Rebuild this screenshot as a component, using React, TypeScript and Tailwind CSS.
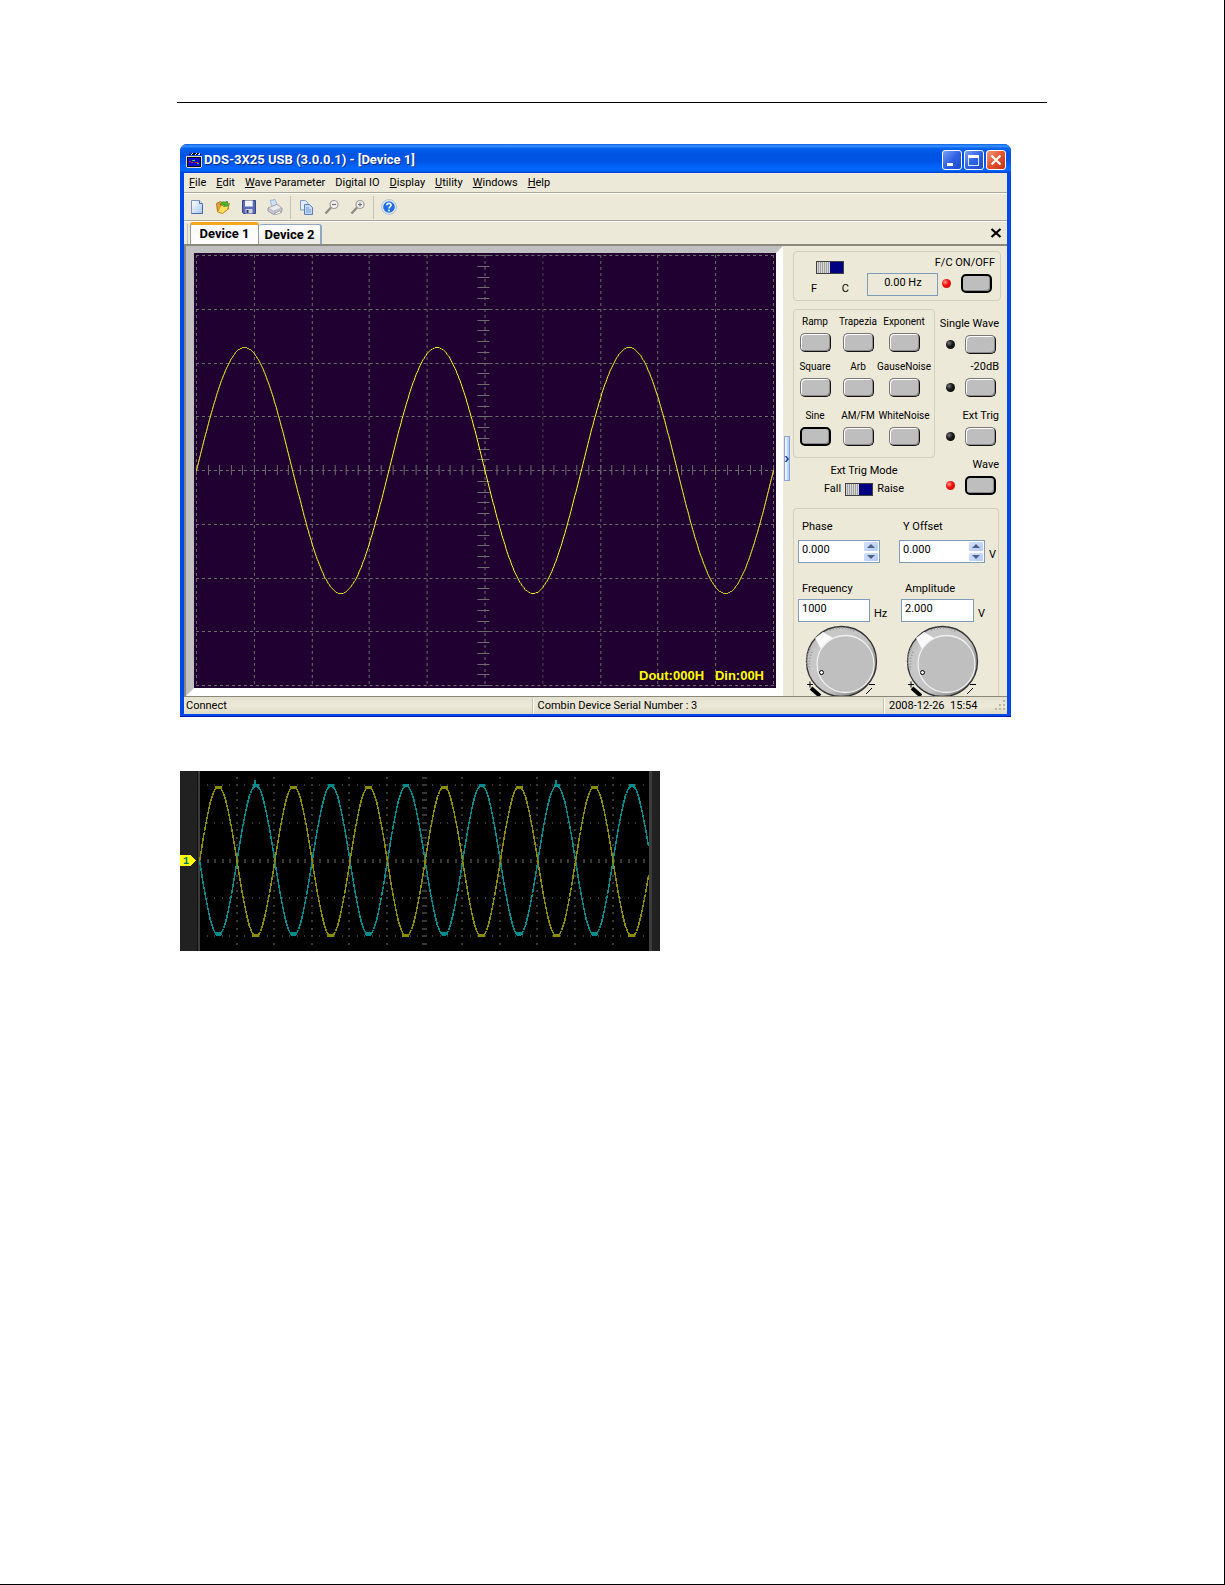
import { useState } from "react"
import type { ReactNode } from "react"

const MENUS = [
  ["", "F", "ile"],
  ["", "E", "dit"],
  ["", "W", "ave Parameter"],
  ["Di", "g", "ital IO"],
  ["", "D", "isplay"],
  ["", "U", "tility"],
  ["", "W", "indows"],
  ["", "H", "elp"],
]

const WAVE_ROWS = [
  { names: ["Ramp", "Trapezia", "Exponent"], className: "mt-[5px]" },
  { names: ["Square", "Arb", "GauseNoise"], className: "mt-2" },
  { names: ["Sine", "AM/FM", "WhiteNoise"], className: "mt-3" },
]

// stair-stepped sine, one point per `step` pixels
function sinePath(x0: number, x1: number, mid: number, amp: number, start: number, period: number, step: number) {
  let d = ""
  for (let x = x0; x <= x1; x += step) {
    const y = Math.round(mid - amp * Math.sin(((x - start) / period) * Math.PI * 2))
    d += `${d ? "L" : "M"}${x + 0.5} ${y + 0.5}`
  }
  return d
}

const range = (n: number) => Array.from({ length: n }, (_, i) => i)

/* ---------- toolbar icons ---------- */

function NewIcon() {
  return (
    <svg width="16" height="16" viewBox="0 0 16 16">
      <defs>
        <linearGradient id="sheet" x1="0" y1="0" x2="1" y2="1">
          <stop offset="0" stopColor="#fff" />
          <stop offset="1" stopColor="#a9c6f5" />
        </linearGradient>
      </defs>
      <path d="M2.5 1.5h8l3 3v10h-11z" fill="url(#sheet)" stroke="#7d93c8" />
      <path d="M10.500 1.500v3h3" fill="#dfe9fb" stroke="#5871b4" />
      <path d="M2.500 14.500h11v-9" fill="none" stroke="#4a66ae" />
    </svg>
  )
}

function OpenIcon() {
  return (
    <svg width="16" height="16" viewBox="0 0 16 16">
      <path d="M1.500 4.500l4-2 2 1.500 5-1 1 7-6 4-5-2z" fill="#e8a43a" stroke="#b8701c" />
      <path d="M2.500 13l3-6 9-2.500-2 6-5 4z" fill="#ffdf5e" stroke="#c98a22" />
      <path d="M5 6c1-3.500 4-4 6-2.500l1-1.500 1.500 5-5 .5 1.300-1.700C8.500 5 7 5 5 6z" fill="#49b83a" stroke="#25831d" strokeWidth=".6" />
    </svg>
  )
}

function SaveIcon() {
  return (
    <svg width="16" height="16" viewBox="0 0 16 16">
      <path d="M1.500 1.500h13v13h-12l-1-1z" fill="#5a6bb5" stroke="#3a4586" />
      <path d="M4 1.500h8v6H4z" fill="#f4f6fb" />
      <path d="M11 2h1v5h-1z" fill="#c3cbe4" />
      <path d="M4.500 10h7v4.500h-7z" fill="#cfd3e2" />
      <path d="M5.500 11h2v3h-2z" fill="#2c3570" />
    </svg>
  )
}

function PrintIcon() {
  return (
    <svg width="16" height="16" viewBox="0 0 16 16">
      <path d="M3 1.500l5-1 2.500 6-5 2z" fill="#cfe2fb" stroke="#92a9cc" strokeWidth=".8" />
      <path d="M1 9l9-3.500 5 3.500v3l-8.500 3.500L1 12z" fill="#c9cad0" stroke="#8b8d96" strokeWidth=".8" />
      <path d="M1 9l5.500 3 8.500-3-5-3.500z" fill="#ececf0" stroke="#9a9ca4" strokeWidth=".6" />
      <path d="M7 14.500l5.500-2.500 2 1.500-5 2z" fill="#fff" stroke="#777" strokeWidth=".6" />
    </svg>
  )
}

function CopyIcon() {
  return (
    <svg width="16" height="16" viewBox="0 0 16 16">
      <path d="M2.500 1.500h5l2.500 2.500v7H2.500z" fill="#e2ecfc" stroke="#7f9bd0" />
      <path d="M6.500 5.500h5l3 3v7h-8z" fill="#c4d9f9" stroke="#5c7fc2" />
      <path d="M8 9h3M8 11h5M8 13h5" stroke="#7f9bd0" />
    </svg>
  )
}

function ZoomIcon({ plus }: { plus?: boolean }) {
  return (
    <svg width="16" height="16" viewBox="0 0 16 16">
      <path d="M1.500 14.500l5.500-6" stroke="#8d8881" strokeWidth="2.200" />
      <circle cx="10" cy="5.500" r="4" fill="#f1eff2" stroke="#a09c9a" strokeWidth="1.200" />
      <path d={plus ? "M8 5.500h4M10 3.500v4" : "M8 5.500h4"} stroke="#77706e" strokeWidth="1.200" />
    </svg>
  )
}

function HelpIcon() {
  return (
    <svg width="16" height="16" viewBox="0 0 16 16">
      <circle cx="8" cy="8" r="7.400" fill="#e8eef8" stroke="#a6b4cc" strokeWidth=".8" />
      <circle cx="8" cy="8" r="5.800" fill="#1f6fe0" />
      <path d="M5.800 6.300C6 3.600 10.300 3.800 10 6.300 9.800 7.700 8 7.600 8 9.500" fill="none" stroke="#fff" strokeWidth="1.600" />
      <circle cx="8" cy="11.500" r="1" fill="#fff" />
    </svg>
  )
}

function AppIcon() {
  return (
    <svg width="16" height="16" viewBox="0 0 16 16" shapeRendering="crispEdges">
      <path d="M3 2l3-1h8l1 2H3z" fill="#000" />
      <path d="M4 3l2-2h1l-1 2zM8 3l2-2h1l-1 2zM12 3l1-2h1v2z" fill="#e8e4d8" />
      <path d="M0 4h15v1H0zM0 4h1v11H0z" fill="#dcd8cc" />
      <path d="M1 5h14v10H1z" fill="#000" />
      <path d="M15 4h1v11h-1zM1 15h14v1H1z" fill="#dcd8cc" />
      <path d="M2 6h12v8H2z" fill="#0a0ac8" />
      <path d="M3 9h2v1h2v1H5v-1H3z" fill="#e22" />
      <path d="M6 8h3v1H6zM11 11h2v1h-2z" fill="#2e2" />
      <path d="M9 10h3v1H9z" fill="#e22" />
    </svg>
  )
}

const TOOLS: { label: string; icon: ReactNode }[][] = [
  [
    { label: "New", icon: <NewIcon /> },
    { label: "Open", icon: <OpenIcon /> },
    { label: "Save", icon: <SaveIcon /> },
    { label: "Print", icon: <PrintIcon /> },
  ],
  [
    { label: "Copy", icon: <CopyIcon /> },
    { label: "Zoom out", icon: <ZoomIcon /> },
    { label: "Zoom in", icon: <ZoomIcon plus /> },
  ],
  [{ label: "About", icon: <HelpIcon /> }],
]

/* ---------- window chrome ---------- */

function TitleBar() {
  const base = "flex h-5 w-5 items-center justify-center rounded-[3px] border border-white"
  return (
    <header className="flex h-[29px] items-center rounded-t-[7px] bg-[linear-gradient(#0a5fe0_0%,#3a93ff_7%,#0560ee_16%,#0053e1_35%,#0055e5_60%,#0066ff_82%,#0064f8_92%,#003dd0_100%)] pt-[3px] pr-[5px] pl-[6px]">
      <AppIcon />
      <h1 className="ml-[2px] flex-1 text-[13px] leading-4 font-bold whitespace-nowrap text-white [text-shadow:1px_1px_#0a2a80]">
        DDS-3X25 USB (3.0.0.1) - [Device 1]
      </h1>
      <div className="flex gap-[2px]">
        <button aria-label="Minimize" className={`${base} bg-linear-to-br from-[#7b9ff2] via-[#2f62e4] to-[#1c49cc]`}>
          <svg width="18" height="18" viewBox="0 0 18 18">
            <path d="M4 12h6v3H4z" fill="#fff" />
          </svg>
        </button>
        <button aria-label="Maximize" className={`${base} bg-linear-to-br from-[#7b9ff2] via-[#2f62e4] to-[#1c49cc]`}>
          <svg width="18" height="18" viewBox="0 0 18 18" shapeRendering="crispEdges">
            <path d="M3.500 5.500h10v9h-10z" fill="none" stroke="#dbe6ff" />
            <path d="M3 4h11v3H3z" fill="#fff" />
          </svg>
        </button>
        <button aria-label="Close" className={`${base} bg-linear-to-br from-[#f0977c] via-[#e4502c] to-[#c4330f]`}>
          <svg width="18" height="18" viewBox="0 0 18 18">
            <path d="M4.500 4.500l9 9M13.500 4.500l-9 9" stroke="#fff" strokeWidth="2.200" />
          </svg>
        </button>
      </div>
    </header>
  )
}

function MenuBar() {
  return (
    <nav className="flex h-5 items-center gap-[10px] border-b border-[#aca899] pl-[5px]">
      {MENUS.map(([before, key, after]) => (
        <button key={key + after} className="whitespace-nowrap">
          {before}
          <u className="underline-offset-1">{key}</u>
          {after}
        </button>
      ))}
    </nav>
  )
}

function ToolBar() {
  return (
    <div className="flex h-7 items-center border-t border-b border-t-white border-b-[#aca899] pl-[5px]">
      {TOOLS.map((group, i) => (
        <div key={i} className="flex items-center">
          {i > 0 && <div className="mx-[7px] h-[23px] w-px bg-[#c5c2b2]" />}
          <div className="flex gap-[10px]">
            {group.map((t) => (
              <button key={t.label} aria-label={t.label}>
                {t.icon}
              </button>
            ))}
          </div>
        </div>
      ))}
    </div>
  )
}

function TabStrip() {
  return (
    <div className="flex h-[25px] items-end border-t border-b-2 border-t-white border-b-[#8a887a] pl-[3px]">
      <div className="mr-[2px] h-5 w-px bg-[#c5c2b2]" />
      <button className="h-[22px] w-[69px] rounded-t-[3px] border-x border-t-3 border-x-[#919b9c] border-t-[#f5a623] bg-[#fcfcfe] pb-[2px] text-[13px] leading-4 font-bold">
        Device 1
      </button>
      <button className="h-5 w-[63px] rounded-t-[3px] border-t border-r-2 border-[#91a7c4] bg-linear-to-b from-white to-[#ecebe6] text-[13px] leading-4 font-bold">
        Device 2
      </button>
      <button aria-label="Close tab" className="mr-[5px] mb-[6px] ml-auto">
        <svg width="12" height="10" viewBox="0 0 12 10">
          <path d="M1.500 1l9 8M10.500 1l-9 8" stroke="#000" strokeWidth="2.200" />
        </svg>
      </button>
    </div>
  )
}

/* ---------- scope ---------- */

function Scope() {
  return (
    <div className="relative min-w-0 flex-1 border-t-7 border-r-7 border-b-8 border-l-8 border-t-[#c0c0c0] border-r-white border-b-white border-l-[#c0c0c0] bg-[#200030]">
      <svg
        className="absolute h-full w-full"
        viewBox="0 0 583 435"
        preserveAspectRatio="none"
        fill="none"
        shapeRendering="crispEdges"
      >
        <g stroke="#6d6d6d">
          {range(11).map((i) => {
            const x = Math.round(2 + i * 57.8) + 0.5
            return <path key={i} d={`M${x} 2V433`} strokeDasharray="3 3" opacity={i === 6 ? 0.6 : 1} />
          })}
          {range(9).map((i) => {
            const y = Math.round(2 + i * 53.75) + 0.5
            return <path key={i} d={`M2 ${y}H581`} strokeDasharray="3 3" />
          })}
          {range(41).map((i) => {
            const y = Math.round(2 + i * 10.75) + 0.5
            return <path key={i} d={`M284 ${y}H296`} />
          })}
          {range(51).map((i) => {
            const x = Math.round(2 + i * 11.56) + 0.5
            return <path key={i} d={`M${x} 212V222`} />
          })}
        </g>
        <path d={sinePath(2, 580, 217, 123, 2, 192.7, 1)} stroke="#ffff20" />
      </svg>
      <p className="absolute right-3 bottom-1 font-['Liberation_Sans',Arial,sans-serif] text-[13px] leading-4 font-bold whitespace-pre text-[#ffff00]">
        Dout:000H{"   "}Din:00H
      </p>
    </div>
  )
}

/* ---------- control panel ---------- */

function Led({ on }: { on?: boolean }) {
  return (
    <span
      className={`h-[9px] w-[9px] rounded-full ${
        on
          ? "bg-[radial-gradient(circle_at_35%_35%,#ff9a8a_0%,#f01010_40%,#c00808_100%)]"
          : "bg-[radial-gradient(circle_at_35%_35%,#777_0%,#1c1c1c_40%,#000_100%)]"
      }`}
    />
  )
}

function PushButton({ id, pressed, onClick }: { id: string; pressed?: boolean; onClick?: () => void }) {
  return (
    <button
      id={id}
      aria-pressed={!!pressed}
      onClick={onClick}
      className={`h-[19px] w-[31px] rounded-[5px] bg-[#bebebe] ${
        pressed
          ? "border-2 border-black shadow-[inset_-1px_-1px_#8a8a8a]"
          : "border border-t-[#777] border-r-[#111] border-b-[#111] border-l-[#777] shadow-[inset_1px_1px_#fff,inset_-1px_-1px_#8a8a8a]"
      }`}
    />
  )
}

function Toggle({ label }: { label: string }) {
  const [right, setRight] = useState(false)
  return (
    <button
      role="switch"
      aria-label={label}
      aria-checked={right}
      onClick={() => setRight(!right)}
      className={`flex h-[13px] w-7 border border-[#404040] bg-[#000080] ${right ? "justify-end" : ""}`}
    >
      <span className="h-full w-[13px] bg-[repeating-linear-gradient(90deg,#d8d8d8_0_1px,#a0a0a0_1px_2px)]" />
    </button>
  )
}

function LedControl({ label, on, className }: { label: string; on?: boolean; className: string }) {
  const id = "ctl-" + label.replace(/\W/g, "")
  return (
    <div className={`flex flex-col items-end gap-1 ${className}`}>
      <label htmlFor={id} className="leading-[14px] whitespace-nowrap">
        {label}
      </label>
      <div className="flex items-center gap-[10px] pr-[3px]">
        <Led on={on} />
        <PushButton id={id} pressed={on} />
      </div>
    </div>
  )
}

function Spinner({ label }: { label: string }) {
  const cls =
    "flex flex-1 items-center justify-center rounded-[2px] border border-white bg-linear-to-br from-[#d5e1fd] to-[#b4c8f6]"
  return (
    <div className="flex w-4 flex-col">
      <button aria-label={`${label} up`} className={cls}>
        <svg width="8" height="4" viewBox="0 0 8 4">
          <path d="M0 4l4-4 4 4z" fill="#4d6185" />
        </svg>
      </button>
      <button aria-label={`${label} down`} className={cls}>
        <svg width="8" height="4" viewBox="0 0 8 4">
          <path d="M0 0l4 4 4-4z" fill="#4d6185" />
        </svg>
      </button>
    </div>
  )
}

interface FieldProps {
  label: string
  value: string
  unit?: string
  spin?: boolean
  width: string
  gap: string
}

function Field({ label, value, unit, spin, width, gap }: FieldProps) {
  const id = "field-" + label.replace(/\W/g, "")
  return (
    <div className={`flex flex-col ${gap}`}>
      <label htmlFor={id} className="pl-1 leading-[14px]">
        {label}
      </label>
      <div className="flex">
        <div className={`flex h-[23px] border border-[#7f9db9] bg-white ${width}`}>
          <input id={id} defaultValue={value} className="min-w-0 flex-1 bg-white px-[3px] pb-1 outline-none" />
          {spin && <Spinner label={label} />}
        </div>
        {unit && <span className="self-end pl-1 leading-4">{unit}</span>}
      </div>
    </div>
  )
}

function Knob() {
  return (
    <svg width="84" height="78" viewBox="0 0 84 78">
      <defs>
        <linearGradient id="rim" x1="0.1" y1="0.1" x2="1" y2="0.8">
          <stop offset="0" stopColor="#b4b4b4" />
          <stop offset=".16" stopColor="#c8c8c8" />
          <stop offset=".6" stopColor="#c4c4c4" />
          <stop offset="1" stopColor="#707070" />
        </linearGradient>
      </defs>
      <circle cx="41.500" cy="37.500" r="35" fill="url(#rim)" stroke="#333" strokeWidth="1.300" />
      <path d="M15 14L23 8 33 14 21 25z" fill="#fff" opacity=".9" />
      <path d="M30 6q14-5 26 2M10 24q-5 10-2 20M12 28q-4 8-2 18" stroke="#999" strokeWidth="2" strokeDasharray="1 2" fill="none" />
      <circle cx="45.500" cy="40" r="28.500" fill="#bfbfbf" stroke="#f0f0f0" strokeWidth="1.300" />
      <circle cx="21.500" cy="48.500" r="2" fill="#fff" stroke="#000" />
      <path d="M7 60.500h6M10 57.500v6M69 60.500h6" stroke="#000" />
      <path d="M11 64l9 8" stroke="#000" strokeWidth="4" />
      <path d="M72 64l-6 6" stroke="#000" />
    </svg>
  )
}

function ControlPanel() {
  const [wave, setWave] = useState("Sine")
  return (
    <aside className="relative w-[224px] shrink-0 overflow-hidden pt-[5px] pl-[10px]">
      <button
        aria-label="Collapse panel"
        className="absolute top-[190px] left-px flex h-[45px] w-[6px] items-center justify-center border border-[#8ba4cf] bg-linear-to-r from-white to-[#a9c6f8]"
      >
        <svg width="4" height="6" viewBox="0 0 4 6">
          <path d="M.5 0l2.500 3-2.500 3" stroke="#103090" strokeWidth="1.400" fill="none" />
        </svg>
      </button>

      <section className="flex h-[50px] w-[208px] justify-between rounded-[4px] border border-[#d0d0bf] pr-[5px] pl-[17px]">
        <div className="flex flex-col items-center gap-2 pt-[9px]">
          <Toggle label="Frequency / Counter" />
          <div className="flex w-[38px] justify-between leading-[14px]">
            <span>F</span>
            <span>C</span>
          </div>
        </div>
        <output className="mt-[21px] ml-[10px] flex h-[23px] w-[71px] justify-center border border-[#7f9db9] leading-[18px]">
          0.00 Hz
        </output>
        <LedControl label="F/C ON/OFF" on className="mt-1 -ml-3" />
      </section>

      <div className="mt-2 flex w-[206px] justify-between">
        <div>
          <section className="h-[149px] w-[142px] rounded-[4px] border border-[#d0d0bf]">
            {WAVE_ROWS.map((row) => (
              <div key={row.names[0]} className={`grid grid-cols-[42px_44px_48px] text-[10px] ${row.className}`}>
                {row.names.map((name) => (
                  <div key={name} className="flex flex-col items-center gap-1">
                    <label htmlFor={"wave-" + name} className="leading-[14px] whitespace-nowrap">
                      {name}
                    </label>
                    <PushButton id={"wave-" + name} pressed={wave === name} onClick={() => setWave(name)} />
                  </div>
                ))}
              </div>
            ))}
          </section>
          <div className="mt-[6px] flex flex-col items-center gap-1 leading-[14px]">
            <span>Ext Trig Mode</span>
            <div className="flex items-center gap-1">
              <span>Fall</span>
              <Toggle label="Ext Trig Mode" />
              <span>Raise</span>
            </div>
          </div>
        </div>
        <div className="flex flex-col items-end">
          <LedControl label="Single Wave" className="mt-2" />
          <LedControl label="-20dB" className="mt-[6px]" />
          <LedControl label="Ext Trig" className="mt-3" />
          <LedControl label="Wave" on className="mt-3" />
        </div>
      </div>

      <section className="mt-3 grid w-[206px] grid-cols-[101px_101px] rounded-t-[4px] border border-b-0 border-[#d0d0bf] pt-[11px] pl-1">
        <Field label="Phase" value="0.000" spin width="w-[82px]" gap="gap-[6px]" />
        <Field label="Y Offset" value="0.000" unit="V" spin width="w-[86px]" gap="gap-[6px]" />
        <div className="mt-[19px]">
          <Field label="Frequency" value="1000" unit="Hz" width="w-[72px]" gap="gap-[3px]" />
        </div>
        <div className="mt-[19px] pl-[2px]">
          <Field label="Amplitude" value="2.000" unit="V" width="w-[73px]" gap="gap-[3px]" />
        </div>
        <div className="mt-[2px] pl-[2px]">
          <Knob />
        </div>
        <div className="mt-[2px] pl-[2px]">
          <Knob />
        </div>
      </section>
    </aside>
  )
}

function StatusBar() {
  return (
    <footer className="flex h-[18px] items-center border-t border-[#8a887a] bg-linear-to-b from-[#e4e1d0] via-[#ece9d8] to-[#dedac6]">
      <span className="flex-1 pl-[2px]">Connect</span>
      <span className="flex-1 border-l border-white pl-1 shadow-[-1px_0_#c5c2b2]">Combin Device Serial Number : 3</span>
      <span className="flex w-[123px] items-center justify-between border-l border-white pl-1 whitespace-pre shadow-[-1px_0_#c5c2b2]">
        2008-12-26{"  "}15:54
        <svg width="12" height="12" viewBox="0 0 12 12">
          <path d="M8 0h2v2H8zM4 4h2v2H4zM8 4h2v2H8zM0 8h2v2H0zM4 8h2v2H4zM8 8h2v2H8z" fill="#b8b4a2" />
        </svg>
      </span>
    </footer>
  )
}

/* ---------- captured trace ---------- */

function Trace() {
  const cols = range(13).map((i) => 19 + i * 37.6)
  const rows = [14, 52, 127, 165]
  return (
    <svg
      className="mt-[54px] w-full max-w-[480px]"
      viewBox="0 0 480 180"
      role="img"
      aria-label="Captured sine waves"
      shapeRendering="crispEdges"
    >
      <path d="M0 0h480v180H0z" fill="#000" />
      <path d="M0 0h17v180H0zM472 0h8v180h-8z" fill="#212121" />
      <path d="M17 0h1v180h-1z" fill="#111" />
      <path d="M18 0h2v180h-2zM469 0h3v180h-3z" fill="#3c3c3c" />
      <g fill="#383838">
        {cols.slice(1, 12).map((c) =>
          range(23).map((j) => <rect key={c + "-" + j} x={Math.round(c) - 1} y={Math.round(6.5 + j * 7.55) - 1} width="2" height="2" />),
        )}
        {rows.map((r) =>
          range(60).map((j) => <rect key={r + "-" + j} x={Math.round(19 + j * 7.52)} y={r - 1} width="1" height="2" />),
        )}
        {range(60).map((j) => (
          <rect key={j} x={Math.round(19 + j * 7.52)} y="88" width="2" height="4" />
        ))}
        {range(23).map((j) => (
          <rect key={j} x="242" y={Math.round(6.5 + j * 7.55) - 1} width="5" height="2" />
        ))}
      </g>
      <g fill="none" strokeWidth="1.500">
        <path d={sinePath(19, 468, 89, -75, 19, 75.2, 1)} stroke="#008c8c" />
        <path d={sinePath(19, 468, 90, 75, 19, 75.2, 1)} stroke="#8c8c00" />
      </g>
      <g fill="#008c8c">
        {range(6).map((i) => (
          <path key={i} d={`M${Math.round(73 + i * 75.2)} 13h6v3h-6zM${Math.round(35 + i * 75.2)} 161h7v3h-7z`} />
        ))}
        <path d="M74 9h2v4h-2zM375 9h2v4h-2z" />
      </g>
      <g fill="#8c8c00">
        {range(6).map((i) => (
          <path key={i} d={`M${Math.round(35 + i * 75.2)} 15h7v3h-7zM${Math.round(72 + i * 75.2)} 163h7v3h-7z`} />
        ))}
      </g>
      <path d="M0 84h11l5 5.500-5 5.500H0z" fill="#ffff00" />
      <text x="3" y="93" fontSize="10" fontWeight="700" fontFamily="Liberation Mono, monospace" fill="#007070">
        1
      </text>
    </svg>
  )
}

export default function App() {
  return (
    <div className="min-h-screen border-r border-b border-black bg-white pt-[102px] font-[Roboto,Tahoma,sans-serif] text-[11px] leading-4 text-black">
      <main className="mr-[177px] ml-[177px]">
        <hr className="border-black" />
        <div className="pt-[41px] pl-[3px]">
          <div className="w-full max-w-[831px] rounded-t-[7px] border-b border-[#0019b0] bg-[#0048e8]">
            <TitleBar />
            <div className="mx-1 bg-[#ece9d8]">
              <MenuBar />
              <ToolBar />
              <TabStrip />
              <div className="flex h-[450px] border-l-2 border-[#8a887a]">
                <Scope />
                <ControlPanel />
              </div>
              <StatusBar />
            </div>
            <div className="h-[2px]" />
          </div>
          <Trace />
        </div>
      </main>
    </div>
  )
}
